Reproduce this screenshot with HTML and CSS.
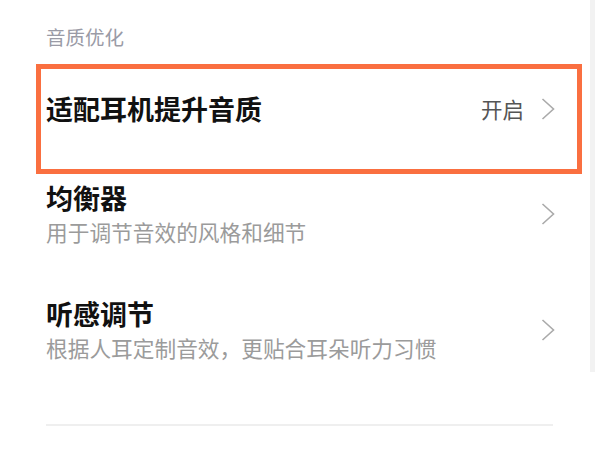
FILE: index.html
```html
<!DOCTYPE html>
<html lang="zh-CN">
<head>
    <meta charset="UTF-8">
    <meta name="viewport" content="width=device-width, initial-scale=1.0">
    <title>音质优化</title>
    <link rel="stylesheet" href="styles.css">
</head>
<body>
    <div class="page">
        <div class="section-title">音质优化</div>

        <div class="row highlight">
            <div class="row-text">
                <div class="row-title">适配耳机提升音质</div>
            </div>
            <div class="row-value">开启</div>
            <svg class="chevron" width="14" height="22" viewBox="0 0 14 22">
                <polyline points="1.5,1 12.5,11 1.5,21" />
            </svg>
        </div>

        <div class="row">
            <div class="row-text">
                <div class="row-title">均衡器</div>
                <div class="row-sub">用于调节音效的风格和细节</div>
            </div>
            <svg class="chevron" width="14" height="22" viewBox="0 0 14 22">
                <polyline points="1.5,1 12.5,11 1.5,21" />
            </svg>
        </div>

        <div class="row">
            <div class="row-text">
                <div class="row-title">听感调节</div>
                <div class="row-sub">根据人耳定制音效，更贴合耳朵听力习惯</div>
            </div>
            <svg class="chevron" width="14" height="22" viewBox="0 0 14 22">
                <polyline points="1.5,1 12.5,11 1.5,21" />
            </svg>
        </div>

        <div class="divider"></div>
    </div>

    <div class="scroll-track"></div>
</body>
</html>
```

FILE: styles.css
```css
* {
    margin: 0;
    padding: 0;
    box-sizing: border-box;
}

body {
    font-family: "Noto Sans CJK SC", "Noto Sans", sans-serif;
    background: #ffffff;
    color: #000000;
    width: 600px;
    height: 450px;
    overflow: hidden;
}

.page {
    padding: 27px 45px 0 46px;
}

.section-title {
    font-size: 19.5px;
    line-height: 20px;
    color: #9a9ba6;
    margin-bottom: 17px;
}

.row {
    display: flex;
    align-items: center;
    padding: 24px 0;
}

.row.highlight {
    margin: 0 -27px -18px -10px;
    padding: 22px 22px 42px 5px;
    border: 5px solid #fa6f40;
    align-items: flex-start;
}

.row-text {
    flex: 1;
}

.row-title {
    font-size: 27px;
    line-height: 36px;
    font-weight: 700;
    color: #111111;
}

.row-sub {
    font-size: 21.7px;
    line-height: 32px;
    color: #9b9b9b;
}

.row-value {
    font-size: 21.5px;
    line-height: 36px;
    color: #555555;
    margin-right: 17px;
}

.chevron {
    fill: none;
    stroke: #aaaaaa;
    stroke-width: 1.6;
    flex-shrink: 0;
}

.highlight .chevron {
    margin-top: 7px;
}

.divider {
    margin-top: 36px;
    height: 2px;
    background: #efefef;
    margin-right: 2px;
}

.scroll-track {
    position: absolute;
    top: 0;
    left: 590px;
    width: 5px;
    height: 372px;
    background: #f2f2f2;
}
```
